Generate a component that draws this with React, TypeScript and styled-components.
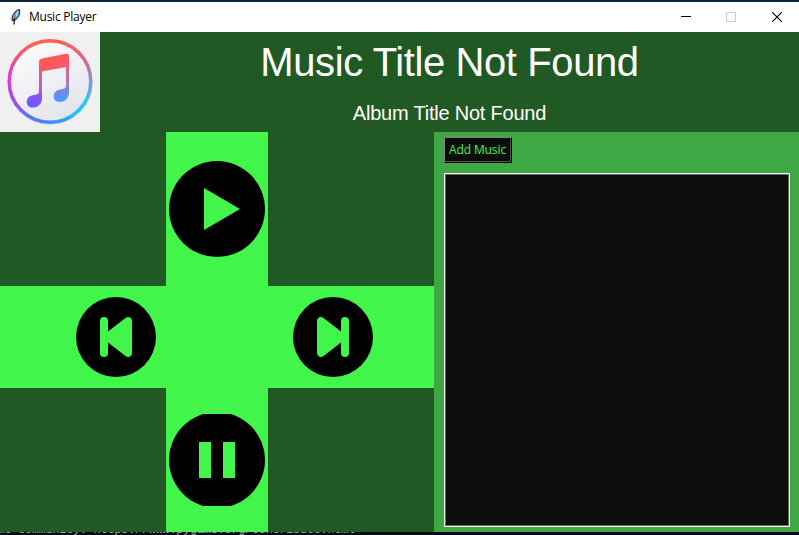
import React from 'react';
import styled, { createGlobalStyle } from 'styled-components';

const GlobalStyle = createGlobalStyle`
  * { box-sizing: border-box; }
  body { margin: 0; overflow: hidden; background: #0c2238; }
  svg { display: block; }
`;

const Desktop = styled.div`
  width: 799px;
  height: 535px;
  padding-top: 2px;
  background: #0c2238;
  display: flex;
  flex-direction: column;
  overflow: hidden;
`;

const TitleBar = styled.header`
  height: 30px;
  flex: none;
  display: flex;
  align-items: center;
  background: #fff;
  padding-left: 9px;
`;

const WindowTitle = styled.span`
  margin-left: 6px;
  font: 12px/16px "Open Sans", sans-serif;
  letter-spacing: -0.25px;
  color: #000;
  flex: 1;
`;

const WindowButton = styled.div<{ $w: number }>`
  width: ${(p) => p.$w}px;
  height: 30px;
  display: flex;
  align-items: center;
  justify-content: center;
`;

const Header = styled.section`
  height: 100px;
  flex: none;
  display: flex;
  background: #215924;
`;

const Titles = styled.div`
  flex: 1;
  display: flex;
  flex-direction: column;
  align-items: center;
  color: #fff;
  font-family: "Liberation Sans", Arial, sans-serif;
`;

const SongTitle = styled.h1`
  margin: 7px 0 0;
  font-size: 40px;
  line-height: 46px;
  font-weight: 400;
  letter-spacing: -0.4px;
  white-space: nowrap;
`;

const AlbumTitle = styled.h2`
  margin: 16px 0 0;
  font-size: 20px;
  line-height: 24px;
  font-weight: 400;
  letter-spacing: -0.22px;
  white-space: nowrap;
`;

const Main = styled.main`
  height: 400px;
  flex: none;
  display: flex;
`;

const Pad = styled.section`
  width: 434px;
  display: grid;
  grid-template-columns: 166px 102px 166px;
  grid-template-rows: 154px 102px 144px;
  background: #215924;
`;

const PadCell = styled.div<{ $lit?: boolean; $pad?: string }>`
  display: flex;
  align-items: center;
  justify-content: center;
  padding: ${(p) => p.$pad ?? '0'};
  background: ${(p) => (p.$lit ? '#42f54b' : '#215924')};
`;

const RoundButton = styled.button<{ $w: number; $h: number }>`
  width: ${(p) => p.$w}px;
  height: ${(p) => p.$h}px;
  flex: none;
  padding: 0;
  border: 0;
  background: none;
`;

const Library = styled.aside`
  flex: 1;
  display: flex;
  flex-direction: column;
  align-items: flex-start;
  padding: 5px 9px 5px 10px;
  background: #3fa845;
`;

const AddButton = styled.button`
  width: 68px;
  height: 26px;
  padding: 0 1px 0 0;
  border: 1px solid;
  border-color: #808080 #000 #000 #808080;
  box-shadow: inset -1px -1px 0 #555;
  background: #0d0d0d;
  color: #42f54b;
  font: 12px/22px "Open Sans", sans-serif;
  letter-spacing: -0.1px;
  white-space: nowrap;
`;

const SongList = styled.div`
  width: 346px;
  height: 354px;
  margin-top: 10px;
  background: #0d0d0d;
  border: 1px solid #f4f4f4;
  box-shadow: inset 0 0 0 1px #696969;
`;

const Backdrop = styled.footer`
  height: 3px;
  overflow: hidden;
  background: #020b1b;
  color: #b4b4b4;
`;

const BackdropText = styled.div`
  margin-top: -9px;
  margin-left: -133px;
  font: 11.46px/14px "Liberation Mono", monospace;
  white-space: pre;
`;

const FeatherIcon = () => (
  <svg width="14" height="18" viewBox="0 0 14 18">
    <path d="M3 12.500C2.500 8 6 2 10.500 1.500c.9 3.500-1 9-5 11z" fill="#5f9fdc" stroke="#1a1a1a" strokeWidth="1" />
    <path d="M8.800 3.500 7.500 8" stroke="#cce5f8" strokeWidth="1.2" />
    <path d="M5.500 10 5 16.500" fill="none" stroke="#111" strokeWidth="1.2" />
  </svg>
);

const CoverArt = () => (
  <svg width="100" height="100" viewBox="0 0 100 100">
    <defs>
      <linearGradient id="ringCool" gradientUnits="userSpaceOnUse" x1="54" y1="8" x2="60" y2="90">
        <stop offset="0" stopColor="#ff6150" />
        <stop offset=".2" stopColor="#ee5c78" />
        <stop offset=".45" stopColor="#a087c0" />
        <stop offset=".75" stopColor="#30c5f4" />
        <stop offset=".92" stopColor="#20c4fc" />
        <stop offset="1" stopColor="#3c8cff" />
      </linearGradient>
      <linearGradient id="ringWarm" gradientUnits="userSpaceOnUse" x1="40" y1="9" x2="35" y2="91">
        <stop offset="0" stopColor="#ff614b" />
        <stop offset=".28" stopColor="#ed4a91" />
        <stop offset=".53" stopColor="#dc3cdb" />
        <stop offset=".8" stopColor="#914cff" />
        <stop offset="1" stopColor="#3c8cff" />
      </linearGradient>
      <linearGradient id="disc" x2=".6" y2="1">
        <stop stopColor="#fff" />
        <stop offset="1" stopColor="#e4e4ec" />
      </linearGradient>
      <linearGradient id="beam" gradientUnits="userSpaceOnUse" x1="50" y1="24" x2="56" y2="42">
        <stop stopColor="#ff594f" />
        <stop offset="1" stopColor="#f65872" />
      </linearGradient>
      <linearGradient id="noteLeft" gradientUnits="userSpaceOnUse" x1="41" y1="35" x2="32" y2="75">
        <stop stopColor="#fb5868" />
        <stop offset=".45" stopColor="#c75dc9" />
        <stop offset=".72" stopColor="#8b50ff" />
        <stop offset="1" stopColor="#655fff" />
      </linearGradient>
      <linearGradient id="noteRight" gradientUnits="userSpaceOnUse" x1="68" y1="30" x2="61" y2="70">
        <stop stopColor="#f45b72" />
        <stop offset=".5" stopColor="#a378ce" />
        <stop offset="1" stopColor="#429dff" />
      </linearGradient>
    </defs>
    <rect width="100" height="100" fill="#f0f0f0" />
    <circle cx="50" cy="50.3" r="42.5" fill="#d6d6d8" />
    <circle cx="50" cy="49.5" r="41" fill="url(#disc)" />
    <path d="M50 8.700A40.800 40.800 0 0 0 50 90.300" fill="none" stroke="url(#ringWarm)" strokeWidth="3.5" />
    <path d="M50 8.700A40.800 40.800 0 0 1 50 90.300" fill="none" stroke="url(#ringCool)" strokeWidth="3.5" />
    <path d="M39 33H42V66C42 72 38 75.600 32.500 75.600C28.500 75.600 26.500 72.500 26.700 69.500C27.200 63.500 33 63.300 36.500 62.500Q39 62 39 59Z" fill="url(#noteLeft)" />
    <path d="M66 30H69V60C69 66 65 70 59.500 70C55.500 70 53.500 67 53.700 64C54.200 57.800 60 57.500 63.500 56.800Q66 56.300 66 53.500Z" fill="url(#noteRight)" />
    <path d="M39 40V30Q39 27 42 26.400L66 21.800Q69 21.300 69 24V35H66L42 39.500V40Z" fill="url(#beam)" />
  </svg>
);

const PlayIcon = () => (
  <svg width="96" height="96" viewBox="0 0 96 96">
    <circle cx="48" cy="48" r="48" />
    <path d="M35 27V69L71 48Z" fill="#42f54b" />
  </svg>
);

const PauseIcon = () => (
  <svg width="96" height="92" viewBox="0 2 96 92">
    <circle cx="48" cy="48" r="48" />
    <path d="M30 30h12v36H30zM54 30h12v36H54z" fill="#42f54b" />
  </svg>
);

const SkipIcon = ({ forward = false }: { forward?: boolean }) => (
  <svg width="80" height="80" viewBox="0 0 80 80">
    <circle cx="40" cy="40" r="40" />
    <g fill="#42f54b" transform={forward ? 'translate(80 0) scale(-1 1)' : undefined}>
      <rect x="24" y="20" width="8" height="40" rx="4" />
      <path d="M32 34.5 49.5 21C52 19 56 20.5 56 24V56C56 59.500 52 61 49.5 59L32 45.500Z" />
    </g>
  </svg>
);

export default function App() {
  return (
    <>
      <GlobalStyle />
      <Desktop>
        <TitleBar>
          <FeatherIcon />
          <WindowTitle>Music Player</WindowTitle>
          <WindowButton $w={42}>
            <svg width="10" height="10"><path d="M0 4.5H10" stroke="#000" /></svg>
          </WindowButton>
          <WindowButton $w={48}>
            <svg width="10" height="10"><path d="M.5.5h9v9h-9z" fill="none" stroke="#ccc" /></svg>
          </WindowButton>
          <WindowButton $w={44}>
            <svg width="10" height="10"><path d="m0 0 10 10M10 0 0 10" stroke="#000" strokeWidth="1.1" /></svg>
          </WindowButton>
        </TitleBar>
        <Header>
          <CoverArt />
          <Titles>
            <SongTitle>Music Title Not Found</SongTitle>
            <AlbumTitle>Album Title Not Found</AlbumTitle>
          </Titles>
        </Header>
        <Main>
          <Pad>
            <PadCell />
            <PadCell $lit><RoundButton $w={96} $h={96} aria-label="Play"><PlayIcon /></RoundButton></PadCell>
            <PadCell />
            <PadCell $lit $pad="0 0 0 66px"><RoundButton $w={80} $h={80} aria-label="Previous"><SkipIcon /></RoundButton></PadCell>
            <PadCell $lit />
            <PadCell $lit $pad="0 36px 0 0"><RoundButton $w={80} $h={80} aria-label="Next"><SkipIcon forward /></RoundButton></PadCell>
            <PadCell />
            <PadCell $lit><RoundButton $w={96} $h={92} aria-label="Pause"><PauseIcon /></RoundButton></PadCell>
            <PadCell />
          </Pad>
          <Library>
            <AddButton>Add Music</AddButton>
            <SongList />
          </Library>
        </Main>
        <Backdrop>
          <BackdropText>Hello from the pygame community. https://www.pygame.org/contribute.html</BackdropText>
        </Backdrop>
      </Desktop>
    </>
  );
}
